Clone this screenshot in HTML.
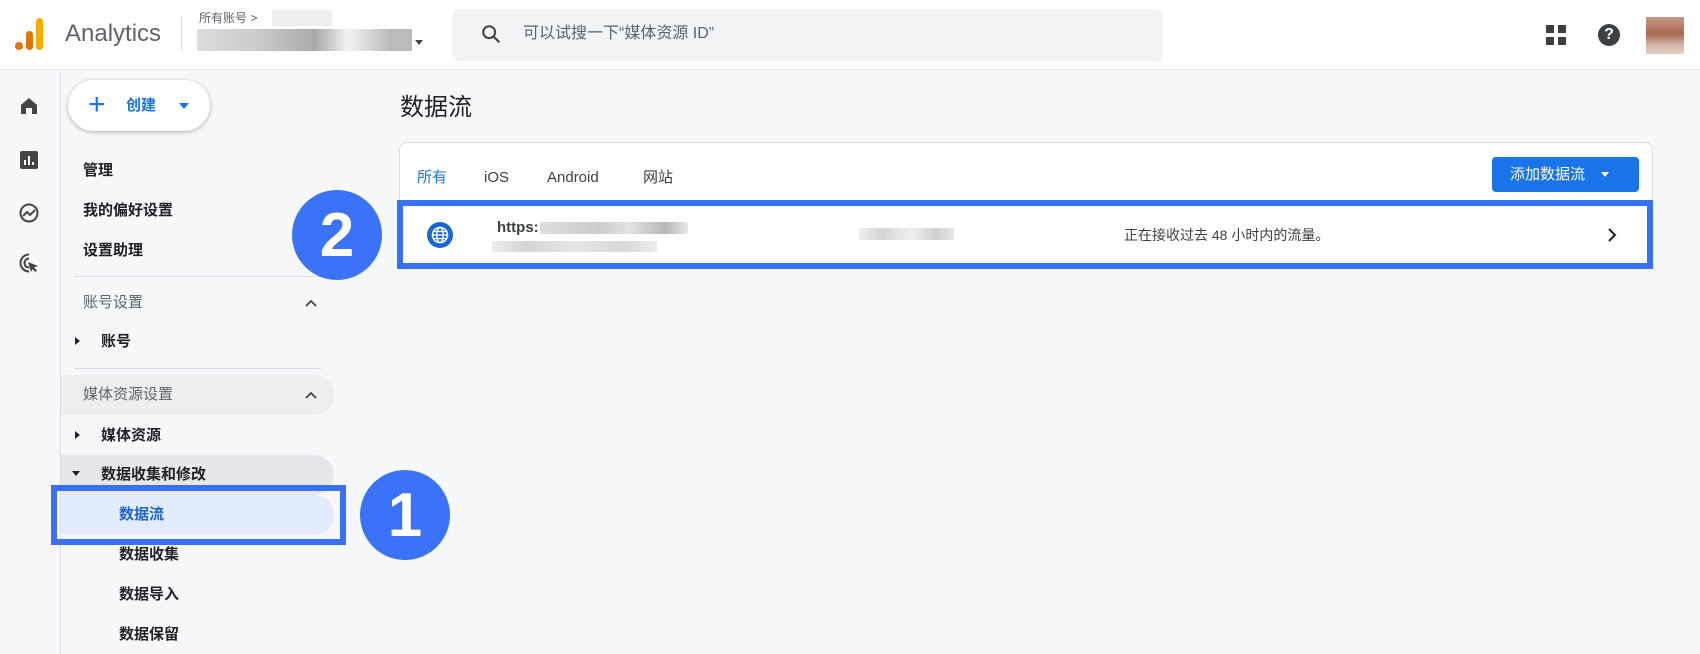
<!DOCTYPE html>
<html><head><meta charset="utf-8"><style>
*{margin:0;padding:0;box-sizing:border-box}
body{width:1700px;height:654px;overflow:hidden;background:#f7f8fa;font-family:"Liberation Sans","Noto Sans CJK SC",sans-serif;position:relative;color:#202124}
.a{position:absolute}
.t{position:absolute;white-space:nowrap;line-height:1}
.blur{position:absolute;background:#dcdcdc}
</style></head><body>
<!-- header -->
<div class="a" style="left:0;top:0;width:1700px;height:70px;background:#fff;border-bottom:1px solid #e3e3e3"></div>
<div class="a" style="left:15px;top:42px;width:8px;height:8px;border-radius:50%;background:#e37400"></div>
<div class="a" style="left:26px;top:31px;width:7px;height:19px;border-radius:4px;background:#e37400"></div>
<div class="a" style="left:36px;top:18px;width:7px;height:32px;border-radius:4px;background:#f9ab00"></div>
<div class="t" style="left:65px;top:22px;font-size:24px;color:#5f6368">Analytics</div>
<div class="a" style="left:181px;top:17px;width:1px;height:35px;background:#dadce0"></div>
<div class="t" style="left:199px;top:12px;font-size:12px;color:#5f6368">所有账号 &gt;</div>
<div class="blur" style="left:272px;top:10px;width:60px;height:16px;background:#eee"></div>
<div class="blur" style="left:197px;top:29px;width:215px;height:22px;background:linear-gradient(90deg,#ddd,#c9c9c9 30%,#aaa 55%,#f2f2f2 70%,#bbb 90%)"></div>
<div class="a" style="left:415px;top:40px;border:4px solid transparent;border-top:5px solid #444"></div>
<div class="a" style="left:452px;top:9px;width:711px;height:52px;border-radius:8px;background:#f1f3f4"></div>
<svg class="a" style="left:480px;top:23px" width="22" height="22" viewBox="0 0 24 24"><circle cx="10" cy="10" r="6.5" fill="none" stroke="#444" stroke-width="2.2"/><path d="M15 15l6 6" stroke="#444" stroke-width="2.4"/></svg>
<div class="t" style="left:523px;top:26px;font-size:16px;color:#5f6368">可以试搜一下“媒体资源 ID”</div>
<div class="a" style="left:1546px;top:25px;width:8px;height:8px;background:#3c4043"></div>
<div class="a" style="left:1558px;top:25px;width:8px;height:8px;background:#3c4043"></div>
<div class="a" style="left:1546px;top:37px;width:8px;height:8px;background:#3c4043"></div>
<div class="a" style="left:1558px;top:37px;width:8px;height:8px;background:#3c4043"></div>
<div class="a" style="left:1598px;top:24px;width:22px;height:22px;border-radius:50%;background:#3c4043;color:#fff;font-size:16px;font-weight:bold;text-align:center;line-height:22px">?</div>
<div class="a" style="left:1646px;top:17px;width:38px;height:37px;background:linear-gradient(180deg,#c99a86,#a86850 45%,#d4b5a8 75%,#e2cfc8)"></div>
<!-- left rail -->
<div class="a" style="left:60px;top:71px;width:1px;height:583px;background:#dadce0"></div>
<svg class="a" style="left:19px;top:96px" width="20" height="20" viewBox="0 0 20 20"><path d="M2 9L10 2l8 7v9h-5v-6H7v6H2z" fill="#444"/></svg>
<svg class="a" style="left:19px;top:150px" width="20" height="20" viewBox="0 0 20 20"><rect x="1" y="1" width="18" height="18" rx="2" fill="#444"/><path d="M6 10v5M10 6v9M14 12v3" stroke="#fff" stroke-width="2"/></svg>
<svg class="a" style="left:18px;top:202px" width="22" height="22" viewBox="0 0 22 22"><circle cx="11" cy="11" r="8.5" fill="none" stroke="#444" stroke-width="2"/><path d="M5 14l4-4 3 3 5-5" fill="none" stroke="#444" stroke-width="2"/></svg>
<svg class="a" style="left:18px;top:252px" width="22" height="22" viewBox="0 0 22 22"><path d="M11 2.5a8.5 8.5 0 1 0 0 17M11 6.5a4.5 4.5 0 1 0 0 9" fill="none" stroke="#444" stroke-width="2"/><path d="M10 10l10 4-4 1.5 3 3-1.5 1.5-3-3L13 20z" fill="#444"/></svg>
<!-- sidebar -->
<div class="a" style="left:68px;top:80px;width:142px;height:51px;border-radius:26px;background:#fff;box-shadow:0 1px 4px rgba(0,0,0,.3)"></div>
<div class="t" style="left:88px;top:90px;font-size:30px;color:#1a73e8;font-weight:300">+</div>
<div class="t" style="left:126px;top:98px;font-size:15px;color:#1a73e8;font-weight:bold">创建</div>
<div class="a" style="left:179px;top:103px;border:5px solid transparent;border-top:6px solid #1a73e8"></div>
<div class="t" style="left:83px;top:163px;font-size:15px;font-weight:bold;color:#202124">管理</div>
<div class="t" style="left:83px;top:203px;font-size:15px;font-weight:bold">我的偏好设置</div>
<div class="t" style="left:83px;top:243px;font-size:15px;font-weight:bold">设置助理</div>
<div class="a" style="left:74px;top:276px;width:247px;height:1px;background:#dadce0"></div>
<div class="t" style="left:83px;top:295px;font-size:15px;color:#5f6368">账号设置</div>
<svg class="a" style="left:304px;top:298px" width="14" height="10"><path d="M2 8l5-5 5 5" fill="none" stroke="#444" stroke-width="1.8"/></svg>
<div class="a" style="left:75px;top:337px;border:4px solid transparent;border-left:5px solid #202124"></div>
<div class="t" style="left:101px;top:334px;font-size:15px;font-weight:bold">账号</div>
<div class="a" style="left:74px;top:368px;width:247px;height:1px;background:#dadce0"></div>
<div class="a" style="left:61px;top:375px;width:273px;height:40px;border-radius:0 20px 20px 0;background:#eceef0"></div>
<div class="t" style="left:83px;top:387px;font-size:15px;color:#5f6368">媒体资源设置</div>
<svg class="a" style="left:304px;top:390px" width="14" height="10"><path d="M2 8l5-5 5 5" fill="none" stroke="#444" stroke-width="1.8"/></svg>
<div class="a" style="left:75px;top:431px;border:4px solid transparent;border-left:5px solid #202124"></div>
<div class="t" style="left:101px;top:428px;font-size:15px;font-weight:bold">媒体资源</div>
<div class="a" style="left:61px;top:455px;width:273px;height:40px;border-radius:0 20px 20px 0;background:#e6e7ea"></div>
<div class="a" style="left:72px;top:471px;border:4px solid transparent;border-top:5px solid #202124"></div>
<div class="t" style="left:101px;top:467px;font-size:15px;font-weight:bold">数据收集和修改</div>
<div class="a" style="left:61px;top:495px;width:273px;height:40px;border-radius:0 20px 20px 0;background:#e3ecfd"></div>
<div class="t" style="left:119px;top:507px;font-size:15px;font-weight:bold;color:#1a62d2">数据流</div>
<div class="t" style="left:119px;top:547px;font-size:15px;font-weight:bold">数据收集</div>
<div class="t" style="left:119px;top:587px;font-size:15px;font-weight:bold">数据导入</div>
<div class="t" style="left:119px;top:627px;font-size:15px;font-weight:bold">数据保留</div>
<!-- main -->
<div class="t" style="left:400px;top:96px;font-size:24px;color:#202124">数据流</div>
<div class="a" style="left:399px;top:142px;width:1254px;height:127px;border:1px solid #dadce0;border-radius:8px;background:#fff"></div>
<div class="t" style="left:417px;top:170px;font-size:15px;color:#1a73e8">所有</div>
<div class="t" style="left:484px;top:170px;font-size:15px;color:#3c4043">iOS</div>
<div class="t" style="left:547px;top:170px;font-size:15px;color:#3c4043">Android</div>
<div class="t" style="left:643px;top:170px;font-size:15px;color:#3c4043">网站</div>
<div class="a" style="left:1492px;top:157px;width:147px;height:35px;border-radius:4px;background:#1a73e8"></div>
<div class="t" style="left:1510px;top:167px;font-size:15px;color:#fff">添加数据流</div>
<div class="a" style="left:1601px;top:172px;border:4px solid transparent;border-top:5px solid #fff"></div>
<div class="a" style="left:397px;top:200px;width:1256px;height:69px;border:6px solid #3a6ff7;background:#fff"></div>
<svg class="a" style="left:426px;top:221px" width="28" height="28" viewBox="0 0 28 28"><circle cx="14" cy="14" r="13" fill="#1967d2"/><circle cx="14" cy="14" r="7.5" fill="none" stroke="#fff" stroke-width="1.6"/><ellipse cx="14" cy="14" rx="3.2" ry="7.5" fill="none" stroke="#fff" stroke-width="1.4"/><path d="M6.5 14h15M7.5 10.5h13M7.5 17.5h13" stroke="#fff" stroke-width="1.3"/></svg>
<div class="t" style="left:497px;top:220px;font-size:15px;font-weight:bold;color:#3c4043">https:</div>
<div class="blur" style="left:540px;top:222px;width:148px;height:12px;background:linear-gradient(90deg,#ddd,#ccc 40%,#e3e3e3 60%,#b8b8b8 85%,#e8e8e8)"></div>
<div class="blur" style="left:492px;top:241px;width:165px;height:11px;background:linear-gradient(90deg,#eee,#d5d5d5 20%,#e6e6e6 50%,#d8d8d8 80%,#eee)"></div>
<div class="blur" style="left:859px;top:228px;width:95px;height:12px;background:linear-gradient(90deg,#eee,#d4d4d4 25%,#f0f0f0 55%,#d0d0d0 80%,#e6e6e6)"></div>
<div class="t" style="left:1124px;top:228px;font-size:14px;color:#3c4043">正在接收过去 48 小时内的流量。</div>
<svg class="a" style="left:1606px;top:227px" width="12" height="16"><path d="M3 2l6 6-6 6" fill="none" stroke="#202124" stroke-width="2"/></svg>
<!-- annotations -->
<div class="a" style="left:51px;top:485px;width:295px;height:60px;border:6px solid #3a6ff7"></div>
<div class="a" style="left:292px;top:190px;width:90px;height:90px;border-radius:50%;background:#3a72f8;color:#fff;font-size:62px;font-weight:bold;text-align:center;line-height:92px">2</div>
<div class="a" style="left:360px;top:470px;width:90px;height:90px;border-radius:50%;background:#3a72f8;color:#fff;font-size:62px;font-weight:bold;text-align:center;line-height:92px">1</div>
</body></html>
